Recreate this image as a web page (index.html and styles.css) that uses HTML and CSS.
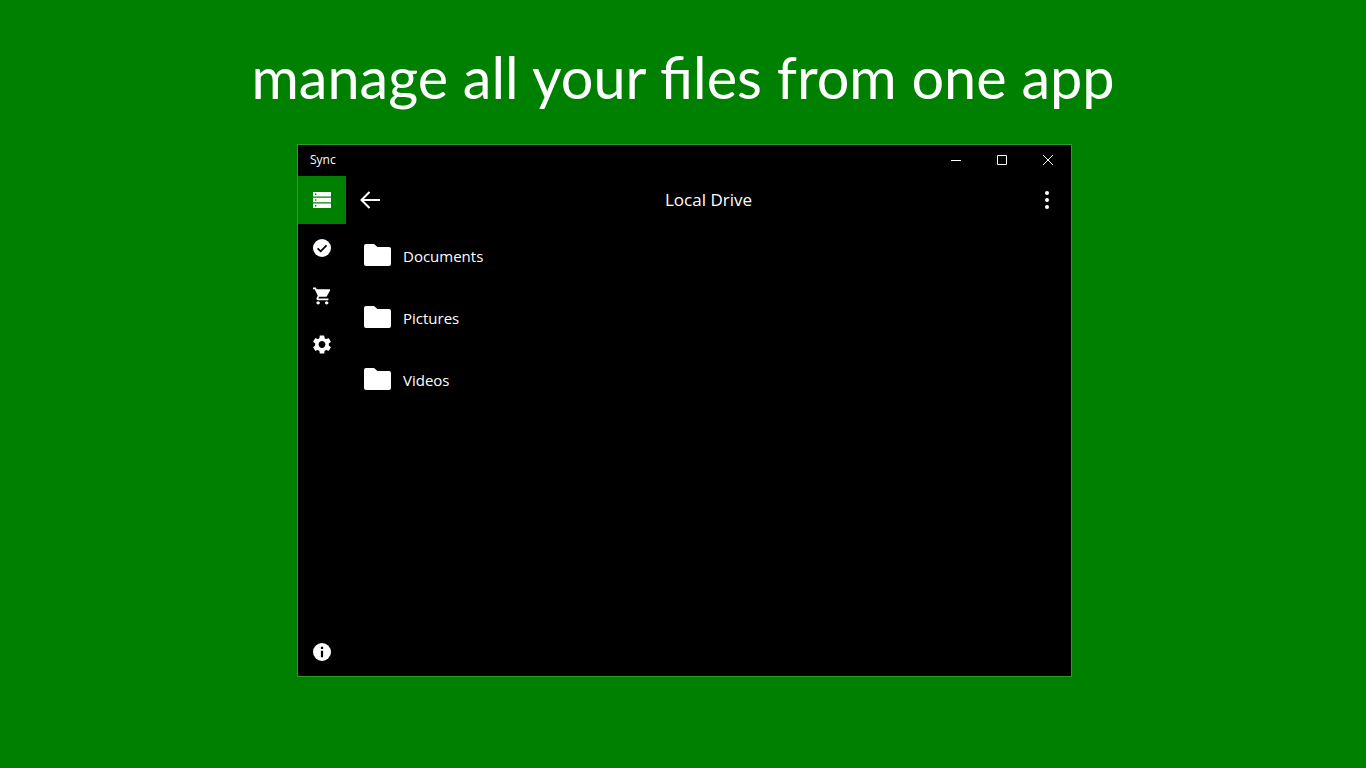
FILE: index.html
```html
<!DOCTYPE html>
<html lang="en">
<head>
  <meta charset="UTF-8">
  <title>Sync</title>
  <link rel="stylesheet" href="styles.css">
</head>
<body>
  <h1 class="headline">manage all your files from one app</h1>

  <div class="window">
    <div class="titlebar">
      <span class="app-name">Sync</span>
      <div class="caption-btns">
        <span class="caption-btn">
          <svg width="10" height="10" viewBox="0 0 10 10"><path d="M0 5.5h10" stroke="#fff" fill="none"/></svg>
        </span>
        <span class="caption-btn">
          <svg width="10" height="10" viewBox="0 0 10 10"><path d="M.5.5h9v9h-9z" stroke="#fff" fill="none"/></svg>
        </span>
        <span class="caption-btn">
          <svg width="10" height="10" viewBox="0 0 10 10"><path d="M0 0l10 10M10 0L0 10" stroke="#fff" fill="none"/></svg>
        </span>
      </div>
    </div>

    <div class="main">
      <nav class="rail">
        <a class="rail-item active">
          <svg width="18" height="16" viewBox="0 0 18 16"><path fill="#fff" fill-rule="evenodd" d="M0 0h18v4.4H0zM2 1.5v1.4h1.4V1.5zM0 5.8h18v4.4H0zM2 7.3v1.4h1.4V7.3zM0 11.6h18V16H0zM2 13.1v1.4h1.4v-1.4z"/></svg>
        </a>
        <a class="rail-item">
          <svg width="18" height="18" viewBox="0 0 18 18"><circle cx="9" cy="9" r="9" fill="#fff"/><path d="M4.6 9.3l3.1 3 5.8-6" stroke="#000" stroke-width="1.7" fill="none"/></svg>
        </a>
        <a class="rail-item">
          <svg width="18" height="18" viewBox="1 2 21 20"><path fill="#fff" d="M7 18c-1.1 0-1.99.9-1.99 2S5.9 22 7 22s2-.9 2-2-.9-2-2-2zM1 2v2h2l3.6 7.59-1.35 2.45c-.16.28-.25.61-.25.96 0 1.1.9 2 2 2h12v-2H7.42c-.14 0-.25-.11-.25-.25l.03-.12.9-1.63h7.45c.75 0 1.41-.41 1.75-1.03l3.58-6.47c.08-.14.12-.31.12-.48 0-.55-.45-1-1-1H5.21l-.94-2H1zm16 16c-1.1 0-1.99.9-1.99 2s.89 2 1.99 2 2-.9 2-2-.9-2-2-2z"/></svg>
        </a>
        <a class="rail-item">
          <svg width="18" height="19" viewBox="2.5 2 19 20"><path fill="#fff" d="M19.14 12.94c.04-.3.06-.61.06-.94 0-.32-.02-.64-.07-.94l2.03-1.58a.49.49 0 00.12-.61l-1.92-3.32a.488.488 0 00-.59-.22l-2.39.96c-.5-.38-1.03-.7-1.62-.94l-.36-2.54a.484.484 0 00-.48-.41h-3.84c-.24 0-.43.17-.47.41l-.36 2.54c-.59.24-1.13.57-1.62.94l-2.39-.96c-.22-.08-.47 0-.59.22L2.74 8.87c-.12.21-.08.47.12.61l2.03 1.58c-.05.3-.09.63-.09.94s.02.64.07.94l-2.03 1.58a.49.49 0 00-.12.61l1.92 3.32c.12.22.37.29.59.22l2.39-.96c.5.38 1.03.7 1.62.94l.36 2.54c.05.24.24.41.48.41h3.84c.24 0 .44-.17.47-.41l.36-2.54c.59-.24 1.13-.56 1.62-.94l2.39.96c.22.08.47 0 .59-.22l1.92-3.32c.12-.22.07-.47-.12-.61l-2.01-1.58zM12 15.6c-1.98 0-3.6-1.62-3.6-3.6s1.62-3.6 3.6-3.6 3.6 1.62 3.6 3.6-1.62 3.6-3.6 3.6z"/></svg>
        </a>
        <a class="rail-item rail-bottom">
          <svg width="18" height="18" viewBox="0 0 18 18"><circle cx="9" cy="9" r="9" fill="#fff"/><path d="M7.9 3.8h2.2V6H7.9zM7.9 7.7h2.2v6.5H7.9z" fill="#000"/></svg>
        </a>
      </nav>

      <div class="content">
        <header class="topbar">
          <svg class="back" width="20" height="18" viewBox="0 0 20 18"><path d="M20 9H1.5M9.5 1L1.5 9l8 8" stroke="#fff" stroke-width="2" fill="none"/></svg>
          <span class="page-title">Local Drive</span>
          <span class="more"><i></i><i></i><i></i></span>
        </header>

        <ul class="folders">
          <li class="folder">
            <svg width="27" height="22" viewBox="0 0 27 22"><path fill="#fff" d="M2 0h8l3.5 3H25a2 2 0 012 2v15a2 2 0 01-2 2H2a2 2 0 01-2-2V2a2 2 0 012-2z"/></svg>
            <span class="folder-name">Documents</span>
          </li>
          <li class="folder">
            <svg width="27" height="22" viewBox="0 0 27 22"><path fill="#fff" d="M2 0h8l3.5 3H25a2 2 0 012 2v15a2 2 0 01-2 2H2a2 2 0 01-2-2V2a2 2 0 012-2z"/></svg>
            <span class="folder-name">Pictures</span>
          </li>
          <li class="folder">
            <svg width="27" height="22" viewBox="0 0 27 22"><path fill="#fff" d="M2 0h8l3.5 3H25a2 2 0 012 2v15a2 2 0 01-2 2H2a2 2 0 01-2-2V2a2 2 0 012-2z"/></svg>
            <span class="folder-name">Videos</span>
          </li>
        </ul>
      </div>
    </div>
  </div>
</body>
</html>
```

FILE: styles.css
```css
body {
  margin: 0;
  height: 768px;
  overflow: hidden;
  background: #008000;
  color: #fff;
  font-family: 'Open Sans', sans-serif;
}

.headline {
  margin: 0;
  height: 144px;
  line-height: 154px;
  text-align: center;
  font-family: Lato, sans-serif;
  font-size: 57.6px;
  font-weight: 400;
}

.window {
  width: 773px;
  height: 531px;
  margin-left: 297px;
  background: #000;
  border: 1px solid #2e9a2e;
  display: flex;
  flex-direction: column;
}

.titlebar {
  height: 31px;
  display: flex;
  justify-content: space-between;
}

.app-name {
  margin-left: 12px;
  font-size: 12px;
  line-height: 30px;
}

.caption-btns {
  display: flex;
}

.caption-btn {
  width: 46px;
  height: 30px;
  display: flex;
  align-items: center;
  justify-content: center;
}

.main {
  flex: 1;
  display: flex;
}

.rail {
  width: 48px;
  display: flex;
  flex-direction: column;
}

.rail-item {
  height: 48px;
  display: flex;
  align-items: center;
  justify-content: center;
}

.rail-item.active {
  background: #008000;
}

.rail-bottom {
  margin-top: auto;
}

.content {
  flex: 1;
}

.topbar {
  height: 48px;
  display: flex;
  align-items: center;
  justify-content: space-between;
  padding: 0 22px 0 14px;
}

.page-title {
  font-size: 17px;
  margin-right: 8px;
  margin-bottom: 2px;
}

.more {
  display: flex;
  flex-direction: column;
  gap: 3px;
}

.more i {
  width: 4px;
  height: 4px;
  border-radius: 50%;
  background: #fff;
}

.folders {
  list-style: none;
  margin: 0;
  padding: 0 0 0 18px;
}

.folder {
  height: 62px;
  display: flex;
  align-items: center;
  gap: 12px;
  font-size: 15px;
}

.folder-name {
  margin-top: 2px;
}
```
